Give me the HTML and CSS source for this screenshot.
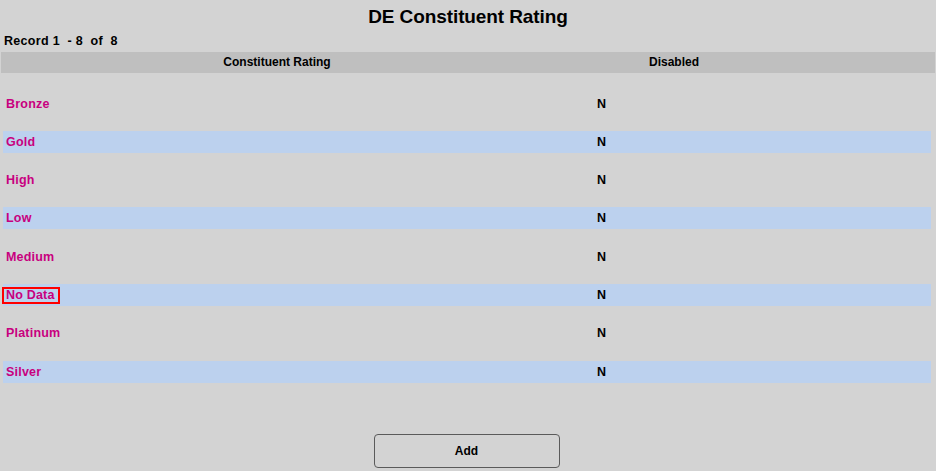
FILE: index.html
```html
<!DOCTYPE html>
<html>
<head>
<meta charset="utf-8">
<link rel="stylesheet" href="styles.css">
</head>
<body>
<h1 class="title">DE Constituent Rating</h1>
<div class="record">Record 1&nbsp; - 8&nbsp; of&nbsp; 8</div>
<div class="grid head">
  <div class="hc">Constituent Rating</div>
  <div class="hc">Disabled</div>
  <div></div>
</div>
<div class="rows">
  <div class="grid row"><div class="c1"><a class="lnk">Bronze</a></div><div class="c2">N</div><div></div></div>
  <div class="grid row alt"><div class="c1"><a class="lnk">Gold</a></div><div class="c2">N</div><div></div></div>
  <div class="grid row"><div class="c1"><a class="lnk">High</a></div><div class="c2">N</div><div></div></div>
  <div class="grid row alt"><div class="c1"><a class="lnk">Low</a></div><div class="c2">N</div><div></div></div>
  <div class="grid row"><div class="c1"><a class="lnk">Medium</a></div><div class="c2">N</div><div></div></div>
  <div class="grid row alt"><div class="c1"><a class="lnk focus">No Data</a></div><div class="c2">N</div><div></div></div>
  <div class="grid row"><div class="c1"><a class="lnk">Platinum</a></div><div class="c2">N</div><div></div></div>
  <div class="grid row alt"><div class="c1"><a class="lnk">Silver</a></div><div class="c2">N</div><div></div></div>
</div>
<div class="footer"><button class="add">Add</button></div>
</body>
</html>
```
FILE: styles.css
```css
html, body {
  margin: 0;
  padding: 0;
  background: #d3d3d3;
  font-family: "Liberation Sans", Arial, sans-serif;
  color: #000;
}
.title {
  margin: 0;
  padding-top: 5px;
  height: 27px;
  line-height: 24px;
  font-size: 19px;
  font-weight: bold;
  text-align: center;
  letter-spacing: -0.1px;
}
.record {
  padding-left: 4px;
  height: 20px;
  line-height: 18px;
  font-size: 12.5px;
  font-weight: bold;
  letter-spacing: 0.3px;
}
.grid {
  display: grid;
  grid-template-columns: 552px 242px 1fr;
}
.head {
  margin: 0 1px 0 1px;
  height: 21px;
  line-height: 21px;
  background: #bfbfbf;
  font-size: 12px;
  font-weight: bold;
}
.hc {
  text-align: center;
}
.rows {
  display: flex;
  flex-direction: column;
  gap: 16.33px;
  padding-top: 19.5px;
}
.row {
  margin: 0 5px 0 3px;
  height: 22px;
  line-height: 22px;
  font-size: 12.5px;
  font-weight: bold;
}
.alt {
  background: #bcd1ee;
}
.c1 {
  padding-left: 2px;
}
.c2 {
  padding-left: 42px;
}
.lnk {
  color: #c8007f;
  text-decoration: none;
  display: inline-block;
  line-height: 13px;
  padding: 0 1px;
  letter-spacing: 0.2px;
}
.focus {
  outline: 2px solid #ff0000;
  margin-left: -1px;
  padding: 0 3px 0 2px;
}
.footer {
  display: flex;
  justify-content: center;
  padding-top: 51px;
  padding-right: 3px;
}
.add {
  width: 186px;
  height: 34px;
  background: #d3d3d3;
  border: 1px solid #5a5a5a;
  border-radius: 4px;
  font-family: "Liberation Sans", Arial, sans-serif;
  font-size: 12px;
  font-weight: bold;
  color: #000;
  padding: 0;
}
```
